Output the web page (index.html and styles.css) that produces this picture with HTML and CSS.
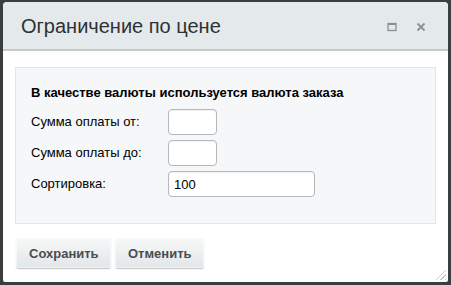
FILE: index.html
```html
<!DOCTYPE html>
<html lang="ru">
<head>
<meta charset="utf-8">
<link rel="stylesheet" href="styles.css">
</head>
<body>
<div class="dialog">
  <div class="head">
    <div class="title">Ограничение по цене</div>
    <div class="tools">
      <svg class="ico" width="10" height="10" viewBox="0 0 10 10"><rect x="1" y="1.5" width="8" height="7" fill="none" stroke="#8d9093" stroke-width="1.3"/><line x1="1" y1="2.3" x2="9" y2="2.3" stroke="#8d9093" stroke-width="1.3"/></svg>
      <svg class="ico" width="10" height="10" viewBox="0 0 10 10"><path d="M1.5 1.5 L8.5 8.5 M8.5 1.5 L1.5 8.5" stroke="#8d9093" stroke-width="1.8" fill="none"/></svg>
    </div>
  </div>
  <div class="content">
    <div class="panel">
      <div class="note">В качестве валюты используется валюта заказа</div>
      <div class="grid">
        <label class="lbl">Сумма оплаты от:</label>
        <div><input class="inp short" type="text"></div>
        <label class="lbl">Сумма оплаты до:</label>
        <div><input class="inp short" type="text"></div>
        <label class="lbl">Сортировка:</label>
        <div><input class="inp long" type="text" value="100"></div>
      </div>
    </div>
    <div class="buttons">
      <button class="btn">Сохранить</button>
      <button class="btn">Отменить</button>
    </div>
    <div class="grip"></div>
  </div>
</div>
</body>
</html>
```
FILE: styles.css
```css
html, body { margin: 0; padding: 0; }
body {
  background: #3b3d3f;
  width: 451px;
  height: 285px;
  padding: 2px 3px 3px 3px;
  box-sizing: border-box;
  font-family: "Liberation Sans", Arial, sans-serif;
  color: #000;
}
.dialog {
  width: 445px;
  height: 280px;
  background: #fff;
  border-radius: 4px 4px 2px 2px;
  overflow: hidden;
  display: flex;
  flex-direction: column;
}
.head {
  height: 47px;
  background: #e4e9ec;
  border-bottom: 2px solid #c5c9cc;
  display: flex;
  align-items: center;
  padding: 0 22px 0 18px;
  flex-shrink: 0;
}
.title {
  flex: 1;
  font-size: 20px;
  color: #2f3133;
  padding-top: 2px;
}
.tools { display: flex; gap: 19px; align-items: center; padding-top: 3px; }
.ico { display: block; }
.content {
  flex: 1;
  padding: 16px 12px 0 12px;
  position: relative;
}
.panel {
  height: 157px;
  box-sizing: border-box;
  background: #f5f7f8;
  border: 1px solid #dfe6e8;
  padding: 17px 15px 0 15px;
}
.note {
  font-size: 13px;
  font-weight: bold;
  color: #000;
  line-height: 16px;
  margin-bottom: 8px;
}
.grid {
  display: grid;
  grid-template-columns: 137px 1fr;
  row-gap: 5px;
  align-items: center;
}
.lbl { font-size: 13px; color: #000; line-height: 26px; }
.inp {
  display: block;
  box-sizing: border-box;
  height: 26px;
  border: 1px solid #b4b8ba;
  border-radius: 4px;
  background: #fff;
  font-family: "Liberation Sans", Arial, sans-serif;
  font-size: 13px;
  padding: 0 5px;
  color: #000;
  outline: none;
  box-shadow: inset 0 1px 1px rgba(0,0,0,0.06);
}
.short { width: 49px; }
.long { width: 147px; }
.buttons {
  display: flex;
  gap: 4px;
  margin-top: 14px;
  padding-left: 1px;
}
.btn {
  height: 30px;
  box-sizing: border-box;
  border: none;
  border-radius: 3px;
  background: linear-gradient(#f7f8f8, #e1e6e8);
  box-shadow: 0 1px 1px rgba(0,0,0,0.25), inset 0 0 0 1px rgba(255,255,255,0.5);
  font-family: "Liberation Sans", Arial, sans-serif;
  font-weight: bold;
  font-size: 13px;
  color: #494c4f;
  padding: 0 13px;
}
.btn:first-child { width: 95px; }
.btn:last-child { width: 89px; }
.grip {
  position: absolute;
  right: 2px;
  bottom: 2px;
  width: 13px;
  height: 13px;
  background: repeating-linear-gradient(135deg, transparent 0 2px, #c7cacc 2px 3px);
  clip-path: polygon(100% 0, 100% 100%, 0 100%);
}
```
